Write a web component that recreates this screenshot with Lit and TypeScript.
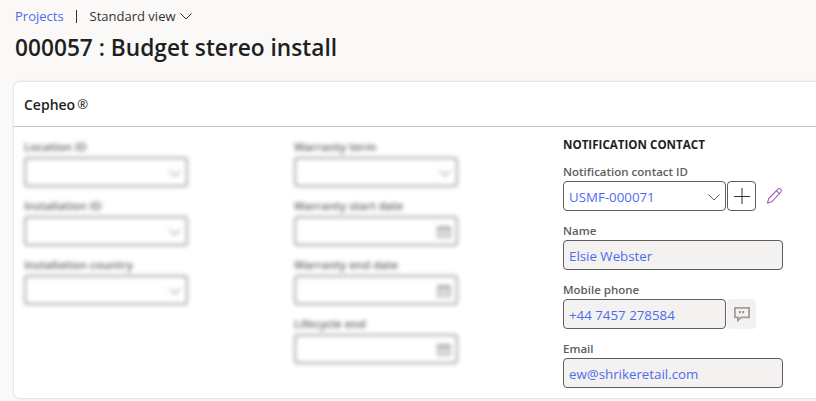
import { LitElement, html, css, svg } from "lit";
import { customElement } from "lit/decorators.js";

const chevron = svg`<svg class="chev" width="14" height="14" viewBox="0 0 14 14" fill="none" stroke="currentColor" stroke-width="1"><path d="M1.500 4.500 7 10l5.500-5.500"/></svg>`;
const calendar = html`<svg width="16" height="16" viewBox="0 0 16 16"><rect x="1" y="2" width="14" height="12" fill="#b5b3b1"/><rect x="2.500" y="6" width="11" height="6.500" fill="#e0dedc"/></svg>`;

@customElement("app-root")
export class AppRoot extends LitElement {
  static styles = css`
    :host { display: block; width: 816px; height: 401px; overflow: hidden; background: #faf9f8; font-family: "Open Sans", "Noto Sans", sans-serif; color: #201f1e; box-sizing: border-box; padding: 6px 0 0 15px; }
    * { box-sizing: border-box; }
    .crumbs { display: flex; align-items: center; height: 19px; font-size: 13px; }
    .crumbs a { color: #4f6bed; }
    .sep { width: 1px; height: 13px; background: #323130; margin: 1px 13px 0 12px; }
    .view { display: flex; align-items: center; gap: 3px; color: #323130; }
    h1 { margin: 8px 0 0; font-size: 22.7px; line-height: 30px; font-weight: 600; color: #201f1e; white-space: nowrap; }
    .card { margin: 19px 0 0 -1px; width: 830px; height: 316px; background: #fff; border-radius: 6px; box-shadow: 0 0 3px rgba(0,0,0,.2); }
    .card-head { height: 45px; border-bottom: 1px solid #c8c6c4; padding-left: 10px; display: flex; align-items: center; font-size: 14px; font-weight: 600; }
    .card-head sup { font-size: 13px; font-weight: 400; line-height: 1; margin-left: 2px; vertical-align: baseline; }
    .grid { display: grid; grid-template-columns: 270px 269px 260px; padding: 10px 0 0 10px; }
    .blurred { filter: blur(2.2px); }
    .field { height: 59px; display: flex; flex-direction: column; }
    .label { height: 20px; font-size: 11.5px; line-height: 20px; font-weight: 600; color: #605e5c; white-space: nowrap; }
    .input { width: 164px; height: 30px; border: 1px solid #605e5c; border-radius: 4px; display: flex; align-items: center; justify-content: space-between; padding: 1px 4px 0 5px; font-size: 13.3px; background: #fff; color: #4f6bed; flex: none; }
    .row .input { width: 163px; }
    .blurred .input { border: 2px solid #a8a6a4; }
    .blurred .chev { color: #8a8886; }
    .input .chev { color: #605e5c; flex: none; }
    .ro { background: #f3f2f1; }
    .input.wide { width: 220px; }
    h2 { margin: 0; height: 20px; font-size: 11.6px; line-height: 17px; font-weight: 700; color: #201f1e; white-space: nowrap; }
    .contact { margin-top: -1px; }
    .contact .label { height: 17px; line-height: 17px; margin-bottom: 1px; }
    .first { margin-top: 7px; }
    .row { display: flex; align-items: center; }
    .square { width: 29px; height: 30px; margin-left: 1px; border-radius: 4px; display: flex; align-items: center; justify-content: center; flex: none; }
    .add { border: 1px solid #605e5c; background: #fff; }
    .msg { background: #f3f2f1; }
    .pencil { margin-left: 10px; display: block; }
  `;

  private blurField(label: string, icon: "chev" | "cal") {
    return html`<div class="field"><div class="label">${label}</div><div class="input"><span></span>${icon === "chev" ? chevron : calendar}</div></div>`;
  }

  render() {
    return html`
      <div class="crumbs"><a>Projects</a><span class="sep"></span><span class="view">Standard view ${chevron}</span></div>
      <h1>000057 : Budget stereo install</h1>
      <div class="card">
        <div class="card-head">Cepheo<sup>®</sup></div>
        <div class="grid">
          <div class="blurred">
            ${this.blurField("Location ID", "chev")}
            ${this.blurField("Installation ID", "chev")}
            ${this.blurField("Installation country", "chev")}
          </div>
          <div class="blurred">
            ${this.blurField("Warranty term", "chev")}
            ${this.blurField("Warranty start date", "cal")}
            ${this.blurField("Warranty end date", "cal")}
            ${this.blurField("Lifecycle end", "cal")}
          </div>
          <div class="contact">
            <h2>NOTIFICATION CONTACT</h2>
            <div class="field first"><div class="label">Notification contact ID</div>
              <div class="row">
                <div class="input"><span>USMF-000071</span>${chevron}</div>
                <div class="square add"><svg width="16" height="16" viewBox="0 0 16 16" stroke="#323130" stroke-width="1"><path d="M8 0v16M0 8.500h16"/></svg></div>
                <svg class="pencil" width="18" height="18" viewBox="0 0 18 18" fill="none" stroke="#a05bb8" stroke-width="1.100"><path d="M1.500 16l1.200-4.500L12 2.200c.9-.9 2-.9 2.800 0 .8.800.8 1.900 0 2.800L5.800 14.800zM10.500 3.700l3.500 3.500"/></svg>
              </div>
            </div>
            <div class="field"><div class="label">Name</div><div class="input ro wide">Elsie Webster</div></div>
            <div class="field"><div class="label">Mobile phone</div>
              <div class="row">
                <div class="input ro">+44 7457 278584</div>
                <div class="square msg"><svg width="18" height="18" viewBox="0 0 18 18" fill="none" stroke="#a19f9d" stroke-width="1.800"><path d="M1.900 2.900h14.200v9.500H8l-3 3v-3H1.900z"/><path d="M6.800 6v2.200M10.200 6v2.200" stroke="#8a8886"/></svg></div>
              </div>
            </div>
            <div class="field"><div class="label">Email</div><div class="input ro wide">ew@shrikeretail.com</div></div>
          </div>
        </div>
      </div>
    `;
  }
}
